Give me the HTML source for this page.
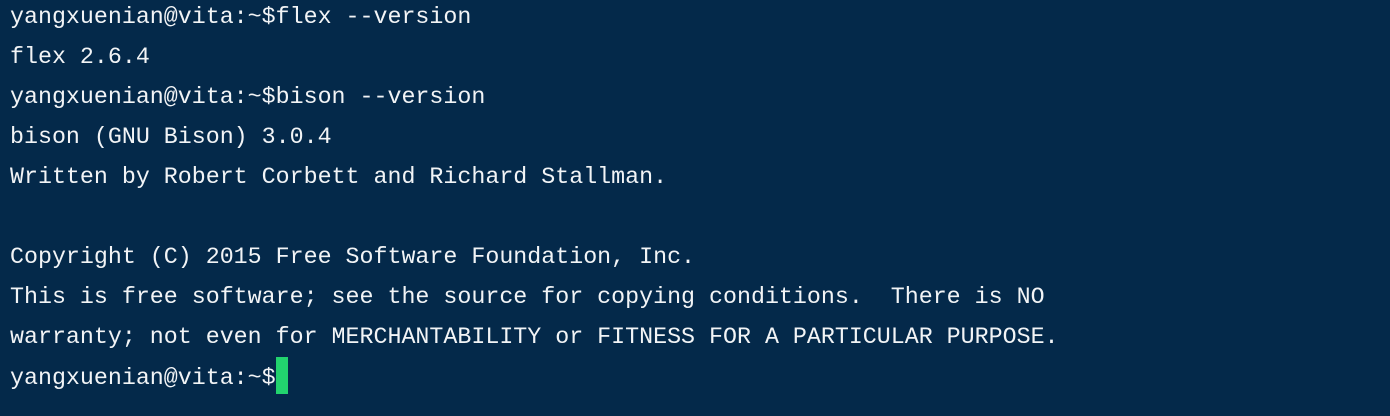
<!DOCTYPE html>
<html><head><meta charset="utf-8"><style>
html,body{margin:0;padding:0;width:1390px;height:416px;overflow:hidden;background:#04294a;}
pre{margin:0;position:absolute;left:10px;top:-3px;font-family:"Liberation Mono",monospace;font-size:23.3px;line-height:40px;color:#f2f4f6;}
.cur{display:inline-block;width:12px;height:37px;background:#22d36e;vertical-align:-10px;}
</style></head><body><pre>yangxuenian@vita:~$flex --version
flex 2.6.4
yangxuenian@vita:~$bison --version
bison (GNU Bison) 3.0.4
Written by Robert Corbett and Richard Stallman.

Copyright (C) 2015 Free Software Foundation, Inc.
This is free software; see the source for copying conditions.  There is NO
warranty; not even for MERCHANTABILITY or FITNESS FOR A PARTICULAR PURPOSE.
yangxuenian@vita:~$<span class="cur"></span></pre></body></html>
